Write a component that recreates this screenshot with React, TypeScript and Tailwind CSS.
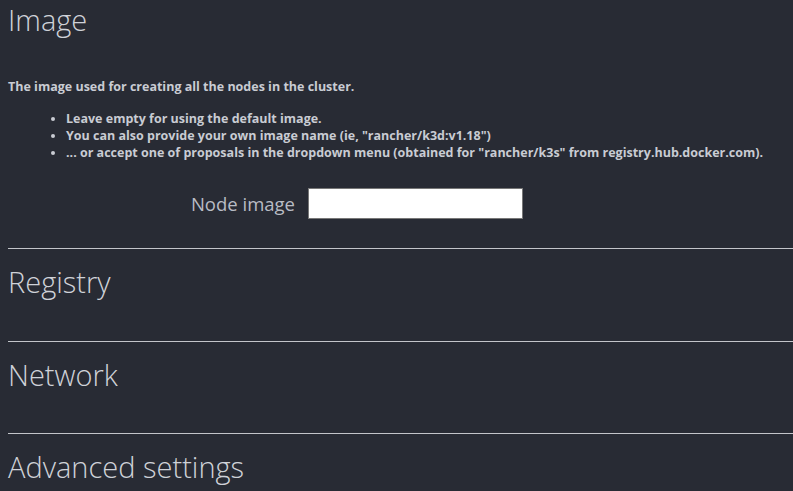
const sections = ["Registry", "Network", "Advanced settings"];

export default function App() {
  return (
    <div className="min-h-screen w-[900px] bg-[#282b34] pl-2 font-['Open_Sans',sans-serif] text-[#c9ccd3]">
      {/* Image */}
      <section className="border-b border-[#c3c5ca] pb-[29px]">
        <h2 className="pt-[1px] text-[29px] font-light leading-[38px] text-[#cfd2d8]">Image</h2>
        <p className="mt-[39px] text-[12.5px] font-bold leading-[18px]">
          The image used for creating all the nodes in the cluster.
        </p>
        <ul className="mt-[14px] list-disc pl-[58px] text-[12.5px] font-bold leading-[17px]">
          <li>Leave empty for using the default image.</li>
          <li>You can also provide your own image name (ie, "rancher/k3d:v1.18")</li>
          <li>
            ... or accept one of proposals in the dropdown menu (obtained for "rancher/k3s" from
            registry.hub.docker.com).
          </li>
        </ul>
        <div className="mt-[27px] flex items-center">
          <label className="w-[300px] pr-[13px] text-right text-[18.5px] text-[#b9bcc4]">Node image</label>
          <input className="h-[31px] w-[215px] border border-[#777] bg-white" />
        </div>
      </section>
      {sections.map((s, i) => (
        <section
          key={s}
          className={
            i === 0
              ? "h-[93px] border-b border-[#c3c5ca]"
              : i === 1
                ? "h-[92px] border-b border-[#c3c5ca]"
                : "h-[92px]"
          }
        >
          <h2 className="pt-[14px] text-[29px] font-light leading-[38px] text-[#cfd2d8]">{s}</h2>
        </section>
      ))}
    </div>
  );
}
